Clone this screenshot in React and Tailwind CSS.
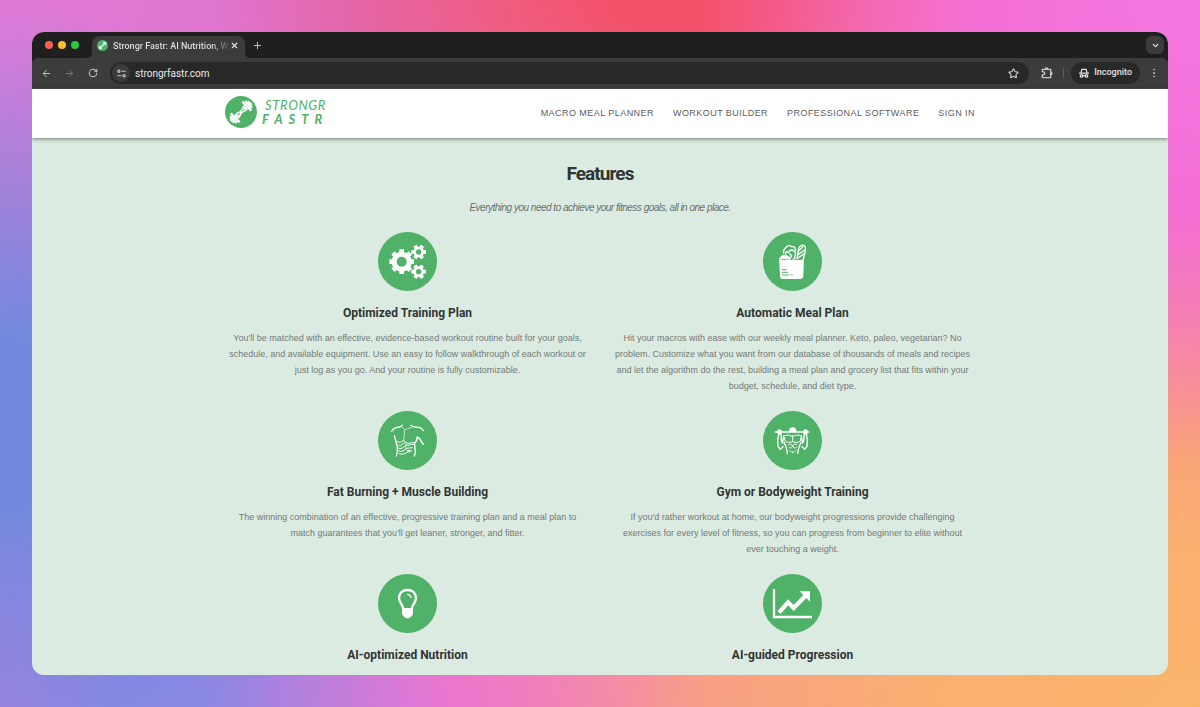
import React from 'react';
import { ArrowLeft, ArrowRight, ChevronDown, EllipsisVertical, Plus, RotateCw, Star, X } from 'lucide-react';

const navLinks = ['Macro Meal Planner', 'Workout Builder', 'Professional Software', 'Sign In'];

const Gear = ({ cx, cy, body, outer, hole, teeth, width }) => (
  <g transform={`translate(${cx} ${cy})`}>
    <circle r={body} fill="#fff" />
    {Array.from({ length: teeth }, (_, i) => (
      <path
        key={i}
        d={`M0 ${-width / 2 - 1}L${outer} ${-width / 2}V${width / 2}L0 ${width / 2 + 1}Z`}
        fill="#fff"
        transform={`rotate(${(360 / teeth) * i})`}
      />
    ))}
    <circle r={hole} fill="#50b168" />
  </g>
);

const GearsIcon = () => (
  <g>
    <Gear cx={95} cy={107} body={30} outer={37} hole={15} teeth={8} width={14} />
    <Gear cx={146} cy={78} body={16} outer={22} hole={8} teeth={6} width={11} />
    <Gear cx={146} cy={137} body={16} outer={22} hole={8} teeth={6} width={11} />
  </g>
);

const GroceriesIcon = () => (
  <g fill="none" stroke="#fff" strokeWidth="4" strokeLinecap="round" strokeLinejoin="round">
    <path d="M86 82C82 70 92 68 93 64C98 57 106 58 110 62C118 61 122 66 121 74" />
    <path d="M92 84C90 76 98 76 101 80M103 77C105 70 114 71 117 76C123 78 123 88 119 91C122 96 118 100 114 100" />
    <path d="M78 98C76 90 84 88 87 90C91 86 99 89 99 94C103 93 105 97 104 101" fill="#fff" />
    <path d="M104 84L110 88L106 96" />
    <path d="M126 99L131 68C134 57 146 54 151 63C153 75 148 88 145 99" />
    <path d="M131 74L143 63M129 86L149 72M129 96L148 83" />
    <path
      d="M72 94C74 99 78 101 84 102H136C142 101 145 99 147 93L145 148C145 155 142 159 136 159H84C78 159 75 155 75 149Z"
      fill="#fff"
      stroke="none"
    />
    <path d="M82 131H94M82 139H98M82 147H102M109 147H112" stroke="#50b168" strokeWidth="3" />
  </g>
);

const TorsoIcon = () => (
  <g fill="none" stroke="#fff" strokeWidth="3" strokeLinecap="round" strokeLinejoin="round">
    <path d="M65 79L70 72L78 68L90 66L97 61M123 61L132 66L146 67L154 70L160 77" strokeWidth="4" />
    <path d="M97 67L104 74L109 73L125 67M103 76V91L101 105" strokeWidth="2" />
    <path d="M73 92L76 103L79 114L82 126L82 140L79 153" strokeWidth="4" />
    <path d="M142 95L140 106L134 115L135 130L136 142L133 153M143 97L149 101L153 108L160 118" strokeWidth="4" />
    <path d="M80 108C87 115 93 111 100 106C106 113 111 117 121 114L132 113" />
    <path d="M86 120C91 125 97 121 99 115M106 119C110 123 118 121 124 118L130 119" />
    <path d="M85 129C92 133 100 129 105 123M109 130C115 131 121 127 127 128" />
    <path d="M86 138C94 141 103 138 108 132M112 137L120 136M88 146C96 149 105 148 111 142L125 138" />
    <path d="M103 108L104 116M107 121L108 131" strokeWidth="2" />
  </g>
);

const PullUpIcon = () => (
  <g fill="none" stroke="#fff" strokeWidth="4" strokeLinecap="round" strokeLinejoin="round">
    <path d="M61 81H161" strokeWidth="5" />
    <path d="M104 79C104 72 108 69 113 69C119 69 123 73 122 79Z" fill="#fff" />
    <rect x="69" y="75" width="9" height="12" rx="4" fill="#fff" />
    <rect x="147" y="75" width="9" height="12" rx="4" fill="#fff" />
    <path d="M71 88L68 104L69 124L76 133L84 125M79 88L78 103L82 114L86 94" />
    <path d="M154 88L157 104L156 124L149 133L141 125M147 88L147 103L143 114L139 94" />
    <path d="M86 92L101 90L110 94M140 92L125 90L116 94M113 91V111" strokeWidth="3" />
    <path d="M88 97L90 108C95 113 104 113 110 111M138 97L136 108C131 113 122 113 116 111" strokeWidth="3" />
    <path d="M87 112L92 122L95 133L97 146M138 112L134 122L130 133L128 146" />
    <path d="M101 119C105 115 110 118 112 122M125 119C121 115 116 118 114 122M101 126C105 131 111 130 112 125M125 126C121 131 116 130 114 125" strokeWidth="3" />
    <path d="M103 137L109 141H117L123 137M113 140V145" strokeWidth="2" />
  </g>
);

const BulbIcon = () => (
  <g fill="none" stroke="#fff" strokeLinecap="round" strokeLinejoin="round">
    <path d="M99 121C99 110 87 103 87 91C87 75 98 66 113 66C127 66 138 75 138 91C138 103 126 110 126 121" strokeWidth="7" />
    <path d="M113 79C119 80 122 83 123 88" strokeWidth="4" />
    <path d="M96 120H129V137C129 142 124 143 122 147C118 152 107 152 103 147C101 143 96 142 96 137Z" fill="#fff" stroke="none" />
  </g>
);

const ChartIcon = () => (
  <g fill="none" stroke="#fff">
    <path d="M57 63V147H171" strokeWidth="7" />
    <path d="M72 134L99 103L116 120L154 81" strokeWidth="13" />
    <path d="M134 70H165V101Z" fill="#fff" stroke="none" />
  </g>
);

const features = [
  {
    id: 'training',
    title: 'Optimized Training Plan',
    description:
      "You'll be matched with an effective, evidence-based workout routine built for your goals, schedule, and available equipment. Use an easy to follow walkthrough of each workout or just log as you go. And your routine is fully customizable.",
    icon: GearsIcon,
  },
  {
    id: 'meals',
    title: 'Automatic Meal Plan',
    description:
      'Hit your macros with ease with our weekly meal planner. Keto, paleo, vegetarian? No problem. Customize what you want from our database of thousands of meals and recipes and let the algorithm do the rest, building a meal plan and grocery list that fits within your budget, schedule, and diet type.',
    icon: GroceriesIcon,
  },
  {
    id: 'muscle',
    title: 'Fat Burning + Muscle Building',
    description:
      "The winning combination of an effective, progressive training plan and a meal plan to match guarantees that you'll get leaner, stronger, and fitter.",
    icon: TorsoIcon,
  },
  {
    id: 'bodyweight',
    title: 'Gym or Bodyweight Training',
    description:
      "If you'd rather workout at home, our bodyweight progressions provide challenging exercises for every level of fitness, so you can progress from beginner to elite without ever touching a weight.",
    icon: PullUpIcon,
  },
  { id: 'nutrition', title: 'AI-optimized Nutrition', icon: BulbIcon },
  { id: 'progression', title: 'AI-guided Progression', icon: ChartIcon },
];

const LogoMark = ({ className }) => (
  <svg viewBox="0 0 96 96" className={className} aria-hidden="true">
    <circle cx="48" cy="48" r="48" fill="#50b168" />
    <g transform="rotate(-45 48 48)" fill="#fff">
      <rect x="7" y="40" width="5" height="16" rx="1" />
      <rect x="12" y="34" width="7" height="28" rx="1" />
      <rect x="19" y="29" width="8" height="38" rx="1" />
      <rect x="69" y="29" width="8" height="38" rx="1" />
      <rect x="77" y="34" width="7" height="28" rx="1" />
      <rect x="84" y="40" width="5" height="16" rx="1" />
      <path d="M27 41C36 38 41 43 48 44C57 44 60 38 69 40V56C60 59 56 53 48 53C41 53 36 59 27 56Z" />
      <path d="M33 45L44 48L33 51M63 44L52 48L63 52" fill="none" stroke="#50b168" strokeWidth="2" />
    </g>
  </svg>
);

const TabStrip = () => (
  <div className="flex h-[26px] items-end bg-[#1f1f1f] pr-1 pl-[13px]">
    <div className="flex h-[26px] items-center gap-[5px]">
      <span className="size-2 rounded-full bg-[#ff5f57]" />
      <span className="size-2 rounded-full bg-[#febc2e]" />
      <span className="size-2 rounded-full bg-[#28c840]" />
    </div>
    <svg viewBox="0 0 6 6" className="ml-[7px] size-[6px]" aria-hidden="true">
      <path d="M6 0V6H0C4 6 6 4 6 0Z" fill="#3c3c3c" />
    </svg>
    <div className="flex h-[22px] w-[153px] items-center rounded-t-lg bg-[#3c3c3c] pr-[6px] pb-[3px] pl-[5px]">
      <LogoMark className="size-[11px] shrink-0" />
      <span className="ml-[5px] flex-1 bg-linear-to-r from-[#e3e3e3] from-85% to-[#3c3c3c] bg-clip-text text-[9px] leading-3 font-medium whitespace-nowrap text-transparent">
        Strongr Fastr: AI Nutrition, W
      </span>
      <button type="button" aria-label="Close tab" className="text-[#e3e3e3]">
        <X className="size-[9px]" strokeWidth={3} />
      </button>
    </div>
    <svg viewBox="0 0 6 6" className="size-[6px]" aria-hidden="true">
      <path d="M0 0V6H6C2 6 0 4 0 0Z" fill="#3c3c3c" />
    </svg>
    <button type="button" aria-label="New tab" className="flex h-[26px] items-center pl-px text-[#c7c7c7]">
      <Plus className="size-[11px]" />
    </button>
    <button
      type="button"
      aria-label="Search tabs"
      className="mb-1 ml-auto flex size-[18px] items-center justify-center rounded-md bg-[#3c3c3c] text-[#e3e3e3]"
    >
      <ChevronDown className="size-[9px]" strokeWidth={3} />
    </button>
  </div>
);

const Toolbar = () => (
  <div className="bg-[#1f1f1f]">
    <div className="flex h-[31px] items-center rounded-t-md border-b border-[#505050] bg-[#3c3c3c] pr-2 pl-[9px] text-[#c7c7c7]">
      <button type="button" aria-label="Back">
        <ArrowLeft className="size-[11px]" />
      </button>
      <button type="button" aria-label="Forward" className="ml-3 text-[#7c7c7c]">
        <ArrowRight className="size-[11px]" />
      </button>
      <button type="button" aria-label="Reload" className="ml-[13px]">
        <RotateCw className="size-[10px]" strokeWidth={2.5} />
      </button>
      <div className="ml-3 flex h-[22px] flex-1 items-center rounded-full bg-[#282828] pr-[10px] pl-[2px]">
        <button type="button" aria-label="Site information" className="flex size-[18px] items-center justify-center rounded-full bg-[#3c3c3c]">
          <svg viewBox="0 0 24 24" className="size-[9px]" fill="none" stroke="currentColor" strokeWidth="3" aria-hidden="true">
            <circle cx="5" cy="6" r="3" />
            <circle cx="19" cy="18" r="3" />
            <path d="M12 6H23M1 18H12" />
          </svg>
        </button>
        <input
          type="text"
          aria-label="Address"
          defaultValue="strongrfastr.com"
          className="ml-[5px] min-w-0 flex-1 bg-transparent text-[10px] text-[#e8e8e8] outline-none"
        />
        <button type="button" aria-label="Bookmark this page">
          <Star className="size-[11px]" strokeWidth={2.5} />
        </button>
      </div>
      <button type="button" aria-label="Extensions" className="ml-3">
        <svg viewBox="0 0 36 36" className="size-3" fill="none" stroke="currentColor" strokeWidth="4" strokeLinejoin="round" aria-hidden="true">
          <path d="M4 7H29V32H4V24C9 24 11 22 11 19C11 16 9 14 4 14Z" />
          <path d="M13 6C13 2 20 2 20 6ZM30 16C34 16 34 23 30 23Z" fill="currentColor" />
        </svg>
      </button>
      <span className="ml-[10px] h-[10px] w-px bg-[#5c5c5c]" />
      <button type="button" className="ml-[7px] flex h-[22px] items-center gap-[5px] rounded-full bg-[#282828] px-2 text-[9px] font-medium text-[#e3e3e3]">
        <svg viewBox="0 0 24 24" className="size-[10px]" fill="none" stroke="currentColor" strokeWidth="3" strokeLinejoin="round" aria-hidden="true">
          <path d="M0 12H24M5 11L7 3H17L19 11" />
          <circle cx="6" cy="19" r="3" />
          <circle cx="18" cy="19" r="3" />
          <path d="M9 18H15" />
        </svg>
        Incognito
      </button>
      <button type="button" aria-label="Menu" className="ml-2">
        <EllipsisVertical className="size-3" />
      </button>
    </div>
  </div>
);

const SiteHeader = () => (
  <header className="relative bg-white shadow-[0_1px_4px_rgba(0,0,0,0.5)]">
    <div className="mx-auto flex h-[49px] max-w-[750px] items-center justify-between">
      <a href="#home" aria-label="Strongr Fastr" className="flex items-center gap-[5px] pb-1 text-[#50b168]">
        <LogoMark className="size-8" />
        <span className="flex flex-col font-['Lato'] text-[13px] leading-[14px] italic">
          <span className="pl-[3px] tracking-wider">STRONGR</span>
          <span className="font-bold tracking-[6px]">FASTR</span>
        </span>
      </a>
      <nav className="flex gap-[19px]">
        {navLinks.map((link) => (
          <a key={link} href="#features" className="text-[9px] tracking-wider whitespace-nowrap text-[#5c5c5c] uppercase">
            {link}
          </a>
        ))}
      </nav>
    </div>
  </header>
);

const FeatureCard = ({ title, description, icon: Icon }) => (
  <article className="flex flex-col items-center text-center">
    <div className="size-[59px] rounded-full bg-[#50b168]">
      <svg viewBox="24 18 177 177" className="size-full" aria-hidden="true">
        <Icon />
      </svg>
    </div>
    <h3 className="mt-3 font-['Roboto'] text-[12px] leading-5 font-bold text-[#303532]">{title}</h3>
    {description && <p className="mt-[7px] px-[3px] text-[9px] leading-4 text-[#737a76]">{description}</p>}
  </article>
);

const App = () => {
  return (
    <div className="flex min-h-screen flex-col bg-[radial-gradient(500px_460px_at_100%_0%,#f578e2_0%,#f46fd6_45%,transparent_100%),radial-gradient(480px_240px_at_58%_0%,#f3526a_0%,#f3526a_18%,transparent_100%),radial-gradient(360px_420px_at_0%_60%,#7089de_0%,#7089de_20%,transparent_100%),radial-gradient(300px_260px_at_13%_100%,#9088e6_0%,#9088e6_15%,transparent_100%),radial-gradient(300px_200px_at_34%_100%,#ee74d4_0%,transparent_100%),radial-gradient(860px_520px_at_100%_100%,#fab46a_0%,#fab070_30%,transparent_100%),linear-gradient(100deg,#e07ad8_0%,#dd70c8_30%,#f685a6_60%,#f8848c_100%)] p-8">
      <div className="flex flex-1 flex-col overflow-hidden rounded-xl bg-[#dcebe2] font-['Liberation_Sans',Arial,sans-serif]">
        <div className="font-['Roboto',sans-serif]">
          <TabStrip />
          <Toolbar />
        </div>
        <SiteHeader />
        <main id="features" className="flex-1 px-5 pt-6 pb-2">
          <h2 className="text-center font-['Roboto'] text-[19px] leading-6 font-bold tracking-tighter text-[#303532]">Features</h2>
          <p className="mt-3 text-center text-[10px] leading-5 tracking-tighter text-[#6a706d] italic">
            Everything you need to achieve your fitness goals, all in one place.
          </p>
          <div className="mx-auto mt-[14px] grid max-w-[750px] grid-cols-2 gap-x-5 gap-y-[17px]">
            {features.map((feature) => (
              <FeatureCard key={feature.id} {...feature} />
            ))}
          </div>
        </main>
      </div>
    </div>
  );
};

export default App;
